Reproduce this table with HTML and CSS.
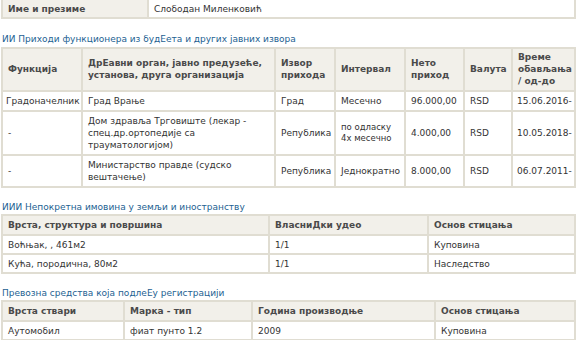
FILE: index.html
```html
<!DOCTYPE html>
<html lang="sr">
<head>
<meta charset="utf-8">
<title>Имовина функционера</title>
<link rel="stylesheet" href="styles.css">
</head>
<body>
<div class="page">
  <table class="grid t0">
    <colgroup><col class="c146"><col></colgroup>
    <tr><th class="lbl">Име и презиме</th><td>Слободан Миленковић</td></tr>
  </table>

  <div class="sec s1">ИИ Приходи функционера из будЕета и других јавних извора</div>
  <table class="grid t1">
    <colgroup>
      <col style="width:80px"><col style="width:193px"><col style="width:60px"><col style="width:70px"><col style="width:59px"><col style="width:48px"><col>
    </colgroup>
    <tr class="head">
      <th>Функција</th>
      <th>ДрЕавни орган, јавно предузеће, установа, друга организација</th>
      <th>Извор прихода</th>
      <th>Интервал</th>
      <th>Нето приход</th>
      <th>Валута</th>
      <th>Време обављања / од-до</th>
    </tr>
    <tr>
      <td class="nw">Градоначелник</td>
      <td>Град Врање</td>
      <td>Град</td>
      <td>Месечно</td>
      <td>96.000,00</td>
      <td>RSD</td>
      <td>15.06.2016-</td>
    </tr>
    <tr>
      <td>-</td>
      <td>Дом здравља Трговиште (лекар - спец.др.ортопедије са трауматологијом)</td>
      <td>Република</td>
      <td class="small">по одласку 4х месечно</td>
      <td>4.000,00</td>
      <td>RSD</td>
      <td>10.05.2018-</td>
    </tr>
    <tr>
      <td>-</td>
      <td>Министарство правде (судско вештачење)</td>
      <td>Република</td>
      <td>Једнократно</td>
      <td>8.000,00</td>
      <td>RSD</td>
      <td>06.07.2011-</td>
    </tr>
  </table>

  <div class="sec s2">ИИИ Непокретна имовина у земљи и иностранству</div>
  <table class="grid">
    <colgroup><col style="width:267px"><col style="width:159px"><col></colgroup>
    <tr class="head"><th>Врста, структура и површина</th><th>ВласниДки удео</th><th>Основ стицања</th></tr>
    <tr><td>Воћњак, , 461м2</td><td>1/1</td><td>Куповина</td></tr>
    <tr><td>Кућа, породична, 80м2</td><td>1/1</td><td>Наследство</td></tr>
  </table>

  <div class="sec s3">Превозна средства која подлеЕу регистрацији</div>
  <table class="grid">
    <colgroup><col style="width:122px"><col style="width:128px"><col style="width:183px"><col></colgroup>
    <tr class="head"><th>Врста ствари</th><th>Марка - тип</th><th>Година производње</th><th>Основ стицања</th></tr>
    <tr><td>Аутомобил</td><td>фиат пунто 1.2</td><td>2009</td><td>Куповина</td></tr>
  </table>
</div>
</body>
</html>
```
FILE: styles.css
```css
html, body {
  margin: 0;
  padding: 0;
  background: #ffffff;
}
body {
  font-family: "DejaVu Sans", Verdana, sans-serif;
  font-size: 9px;
  line-height: 12px;
  color: #333333;
}
.page {
  margin-top: -2px;
  width: 578px;
}
.grid {
  width: 575px;
  margin-left: 1px;
  border-collapse: collapse;
  table-layout: fixed;
}
.grid th,
.grid td {
  border: 2px solid #e0ddd2;
  padding: 3px 5px 2px;
  text-align: left;
  vertical-align: middle;
}
.grid th {
  background: #f2f0ea;
  color: #4a4a4a;
  font-weight: bold;
  padding-bottom: 3px;
}
.t0 th, .t0 td { padding-bottom: 2px; }
.t0 .c146 { width: 146px; }
.t1 .head th { padding-top: 2px; padding-bottom: 3px; }
.t1 td { padding-bottom: 3px; }
.t1 td:last-child { padding-left: 4px; padding-right: 2px; }
.nw { white-space: nowrap; padding-left: 3px !important; padding-right: 0 !important; }
.small { font-size: 8.5px; line-height: 11px; }
.sec {
  color: #1d5f92;
  margin: 13px 0 0;
  padding: 0 2px;
  line-height: 13px;
}
.s1 { margin-top: 14px; margin-bottom: 1px; }
.s2 { margin-top: 13px; }
.s3 { margin-top: 13px; }
```
